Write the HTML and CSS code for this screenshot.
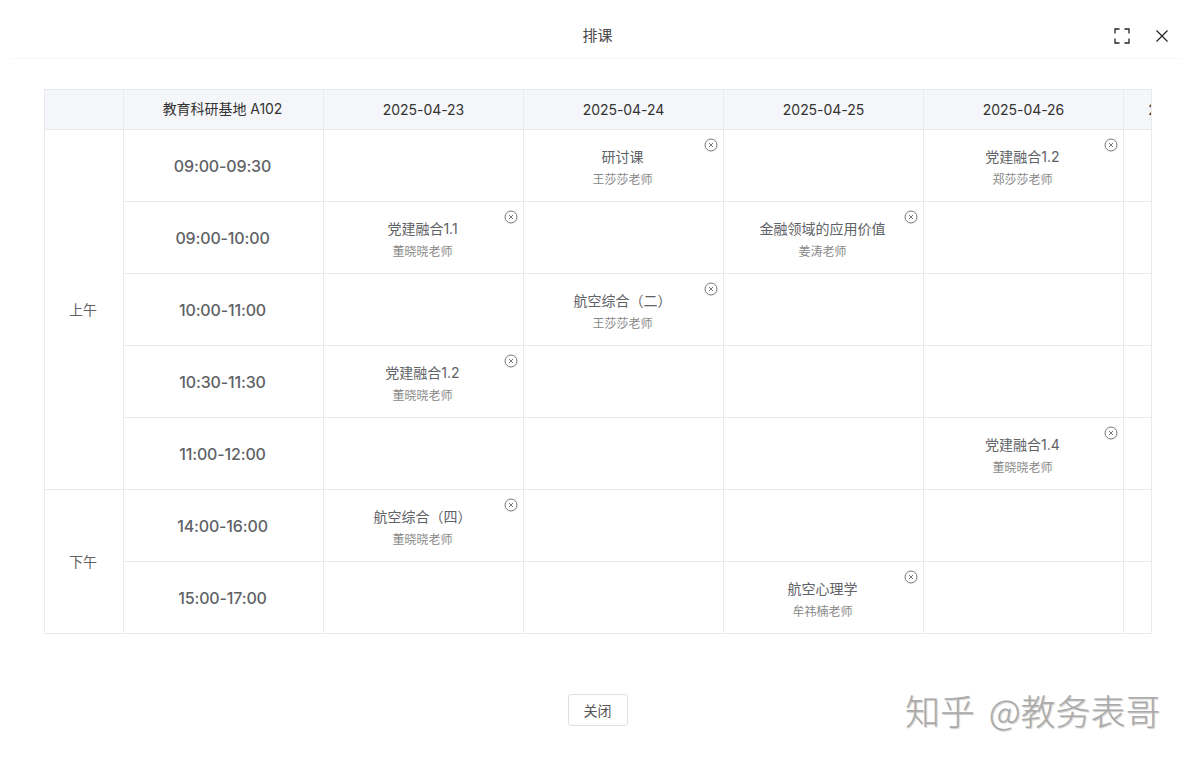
FILE: index.html
```html
<!DOCTYPE html>
<html lang="zh-CN">

	<head>
		<meta charset="UTF-8">
		<meta name="viewport" content="width=device-width, initial-scale=1.0">
		<title>排课</title>
		<link rel="stylesheet" href="styles.css">
	</head>

	<body>
		<svg class="sprite" width="0" height="0">
			<symbol id="del" viewBox="0 0 14 14">
				<circle cx="7" cy="7" r="6" fill="none" stroke="currentColor" />
				<path d="M5 5l4 4M9 5l-4 4" fill="none" stroke="currentColor" />
			</symbol>
		</svg>
		<div class="dialog">
			<header class="head">
				<span class="title">排课</span>
				<div class="tools">
					<svg class="tool" viewBox="0 0 16 16" width="16" height="16">
						<path d="M5.5 1H1v4.5M10.500 1H15v4.500M5.500 15H1v-4.500M10.500 15H15v-4.500" fill="none" stroke="#222" stroke-width="1.300" />
					</svg>
					<svg class="tool" viewBox="0 0 16 16" width="16" height="16">
						<path d="M2.500 2.500l11 11M13.500 2.500l-11 11" fill="none" stroke="#222" stroke-width="1.200" />
					</svg>
				</div>
			</header>
			<div class="wrap">
				<table class="grid">
					<colgroup>
						<col class="c-noon">
						<col class="c-day">
						<col class="c-day">
						<col class="c-day">
						<col class="c-day">
						<col class="c-day">
						<col class="c-last">
					</colgroup>
					<thead>
						<tr>
							<th></th>
							<th class="room">教育科研基地 A102</th>
							<th>2025-04-23</th>
							<th>2025-04-24</th>
							<th>2025-04-25</th>
							<th>2025-04-26</th>
							<th>2025-04-27</th>
						</tr>
					</thead>
					<tbody>
						<tr>
							<td class="noon" rowspan="5">上午</td>
							<td class="time">09:00-09:30</td>
							<td></td>
							<td class="has"><p class="name">研讨课</p><p class="who">王莎莎老师</p><svg class="del"><use href="#del" /></svg></td>
							<td></td>
							<td class="has"><p class="name">党建融合1.2</p><p class="who">郑莎莎老师</p><svg class="del"><use href="#del" /></svg></td>
							<td></td>
						</tr>
						<tr>
							<td class="time">09:00-10:00</td>
							<td class="has"><p class="name">党建融合1.1</p><p class="who">董晓晓老师</p><svg class="del"><use href="#del" /></svg></td>
							<td></td>
							<td class="has"><p class="name">金融领域的应用价值</p><p class="who">姜涛老师</p><svg class="del"><use href="#del" /></svg></td>
							<td></td>
							<td></td>
						</tr>
						<tr>
							<td class="time">10:00-11:00</td>
							<td></td>
							<td class="has"><p class="name">航空综合（二）</p><p class="who">王莎莎老师</p><svg class="del"><use href="#del" /></svg></td>
							<td></td>
							<td></td>
							<td></td>
						</tr>
						<tr>
							<td class="time">10:30-11:30</td>
							<td class="has"><p class="name">党建融合1.2</p><p class="who">董晓晓老师</p><svg class="del"><use href="#del" /></svg></td>
							<td></td>
							<td></td>
							<td></td>
							<td></td>
						</tr>
						<tr>
							<td class="time">11:00-12:00</td>
							<td></td>
							<td></td>
							<td></td>
							<td class="has"><p class="name">党建融合1.4</p><p class="who">董晓晓老师</p><svg class="del"><use href="#del" /></svg></td>
							<td></td>
						</tr>
						<tr>
							<td class="noon" rowspan="2">下午</td>
							<td class="time">14:00-16:00</td>
							<td class="has"><p class="name">航空综合（四）</p><p class="who">董晓晓老师</p><svg class="del"><use href="#del" /></svg></td>
							<td></td>
							<td></td>
							<td></td>
							<td></td>
						</tr>
						<tr>
							<td class="time">15:00-17:00</td>
							<td></td>
							<td></td>
							<td class="has"><p class="name">航空心理学</p><p class="who">牟祎楠老师</p><svg class="del"><use href="#del" /></svg></td>
							<td></td>
							<td></td>
						</tr>
					</tbody>
				</table>
			</div>
			<footer class="foot">
				<button class="btn" type="button">关闭</button>
			</footer>
		</div>
		<div class="mark">知乎 @教务表哥</div>
	</body>

</html>
```

FILE: styles.css
```css
* {
	margin: 0;
	padding: 0;
	box-sizing: border-box;
}

body {
	background: #fff;
	font-family: "Inter", "Noto Sans CJK SC", sans-serif;
	color: #606266;
	overflow: hidden;
}

.sprite {
	display: block;
	height: 0;
}

.dialog {
	width: 1189px;
	height: 759px;
	display: flex;
	flex-direction: column;
}

.head {
	height: 59px;
	margin: 0 9px 0 12px;
	padding: 14px 0 0 3px;
	border-bottom: 1px solid #f7f7f8;
	display: flex;
	align-items: center;
	justify-content: center;
	position: relative;
}

.title {
	font-size: 15px;
	color: #4a4a4a;
	margin-top: -3px;
}

.tools {
	position: absolute;
	top: 28px;
	right: 10px;
	display: flex;
	gap: 24px;
}

.tool {
	display: block;
}

.wrap {
	width: 1108px;
	margin: 30px 0 0 44px;
	overflow: hidden;
	border-right: 1px solid #e9eaed;
}

.grid {
	width: 1209px;
	table-layout: fixed;
	border-collapse: collapse;
}

.c-noon {
	width: 79px;
}

.c-day {
	width: 200px;
}

.c-last {
	width: 130px;
}

.grid th,
.grid td {
	border: 1px solid #e9eaed;
	text-align: center;
	vertical-align: middle;
}

.grid th {
	height: 40px;
	background: #f5f6fa;
	font-size: 14px;
	font-weight: 400;
	letter-spacing: -0.05px;
	color: #333;
}

.grid th.room {
	padding: 0 2px 3px 0;
}

.grid td {
	height: 72px;
	position: relative;
}

.grid td.has {
	padding: 4px 2px 0 0;
}

.grid td.noon {
	padding: 0 2px 2px 0;
	font-size: 14px;
	color: #606266;
}

.grid td.time {
	padding-right: 2px;
	font-size: 16px;
	font-weight: 500;
	letter-spacing: -0.15px;
	color: #606266;
}

.name {
	font-size: 14px;
	line-height: 22px;
	color: #606266;
}

.who {
	font-size: 12px;
	line-height: 20px;
	margin-top: 2px;
	color: #888;
}

.del {
	position: absolute;
	top: 8px;
	right: 5px;
	width: 14px;
	height: 14px;
	color: #777;
}

.foot {
	display: flex;
	justify-content: center;
	padding-left: 7px;
	margin-top: 60px;
}

.btn {
	width: 60px;
	height: 32px;
	padding-right: 1px;
	background: #fff;
	border: 1px solid #dcdfe6;
	border-radius: 3px;
	font-family: inherit;
	font-size: 14px;
	color: #555;
}

.mark {
	position: absolute;
	left: 905px;
	top: 687px;
	font-family: "Noto Sans CJK SC", sans-serif;
	font-size: 35px;
	font-weight: 300;
	line-height: 46px;
	word-spacing: 6px;
	color: #aaa;
	text-shadow: 1px 1px 1px #ccc;
	white-space: nowrap;
}
```
